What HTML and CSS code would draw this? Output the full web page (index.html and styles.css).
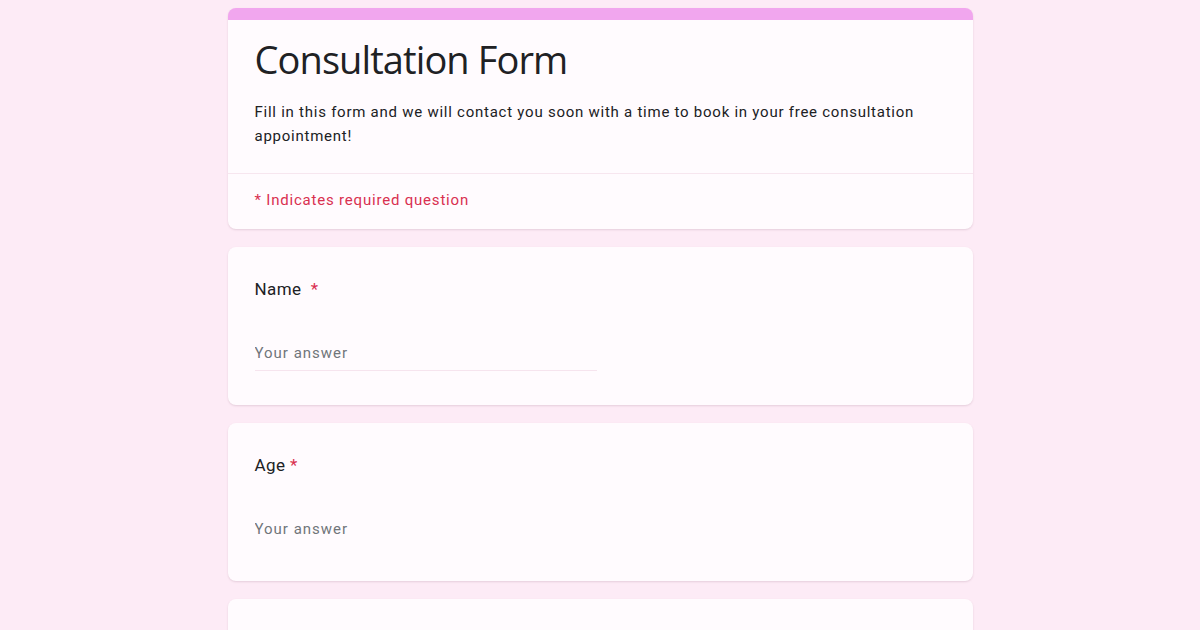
FILE: index.html
```html
<!DOCTYPE html>
<html lang="en">
<head>
    <meta charset="UTF-8">
    <meta name="viewport" content="width=device-width, initial-scale=1.0">
    <title>Consultation Form</title>
    <link rel="stylesheet" href="styles.css">
</head>
<body>
    <div class="container">
        <div class="card header">
            <div class="header-top">
                <h1>Consultation Form</h1>
                <p class="description">Fill in this form and we will contact you soon with a time to book in your free consultation appointment!</p>
            </div>
            <div class="required-note">* Indicates required question</div>
        </div>

        <div class="card question">
            <label for="name">Name&nbsp; <span class="star">*</span></label>
            <input type="text" id="name" class="answer underlined" placeholder="Your answer">
        </div>

        <div class="card question">
            <label for="age">Age <span class="star">*</span></label>
            <input type="text" id="age" class="answer" placeholder="Your answer">
        </div>

        <!-- next question starts below the fold -->
        <div class="card question next"></div>
    </div>
</body>
</html>
```

FILE: styles.css
```css
body {
    margin: 0;
    background: #fdebf6;
    font-family: Roboto, "Liberation Sans", sans-serif;
    color: #202124;
}
.container {
    width: 745px;
    margin: 8px auto 0;
    display: flex;
    flex-direction: column;
    gap: 18px;
}
.card {
    background: #fffbfe;
    border-radius: 8px;
    box-shadow: 0 1px 2px rgba(120, 80, 100, 0.18);
}
.header {
    border-top: 12px solid #f1a6ee;
}
.header-top {
    padding: 12px 27px 25px;
    border-bottom: 1px solid #f7e6ef;
}
h1 {
    margin: 0;
    font-family: "Open Sans", Roboto, sans-serif;
    font-weight: 400;
    font-size: 38px;
    line-height: 54px;
    letter-spacing: -0.9px;
    color: #202124;
}
.description {
    margin: 14px 0 0;
    font-size: 15px;
    line-height: 24px;
    letter-spacing: 0.75px;
}
.required-note {
    padding: 14px 27px 17px;
    font-size: 15px;
    line-height: 24px;
    color: #d93050;
    letter-spacing: 0.8px;
}
.question {
    padding: 30px 27px 34px;
    display: flex;
    flex-direction: column;
}
.question label {
    font-size: 17px;
    line-height: 24px;
    letter-spacing: 0.4px;
}
.star {
    color: #d93050;
}
.answer {
    margin-top: 40px;
    width: 342px;
    padding: 0 0 5px;
    border: none;
    border-bottom: 1px solid transparent;
    background: transparent;
    font-family: Roboto, "Liberation Sans", sans-serif;
    font-size: 15px;
    line-height: 24px;
    letter-spacing: 1px;
    color: #202124;
    outline: none;
}
.answer.underlined {
    border-bottom-color: #f6e4ee;
}
.answer::placeholder {
    color: #70757a;
}
.next {
    min-height: 120px;
}
```
